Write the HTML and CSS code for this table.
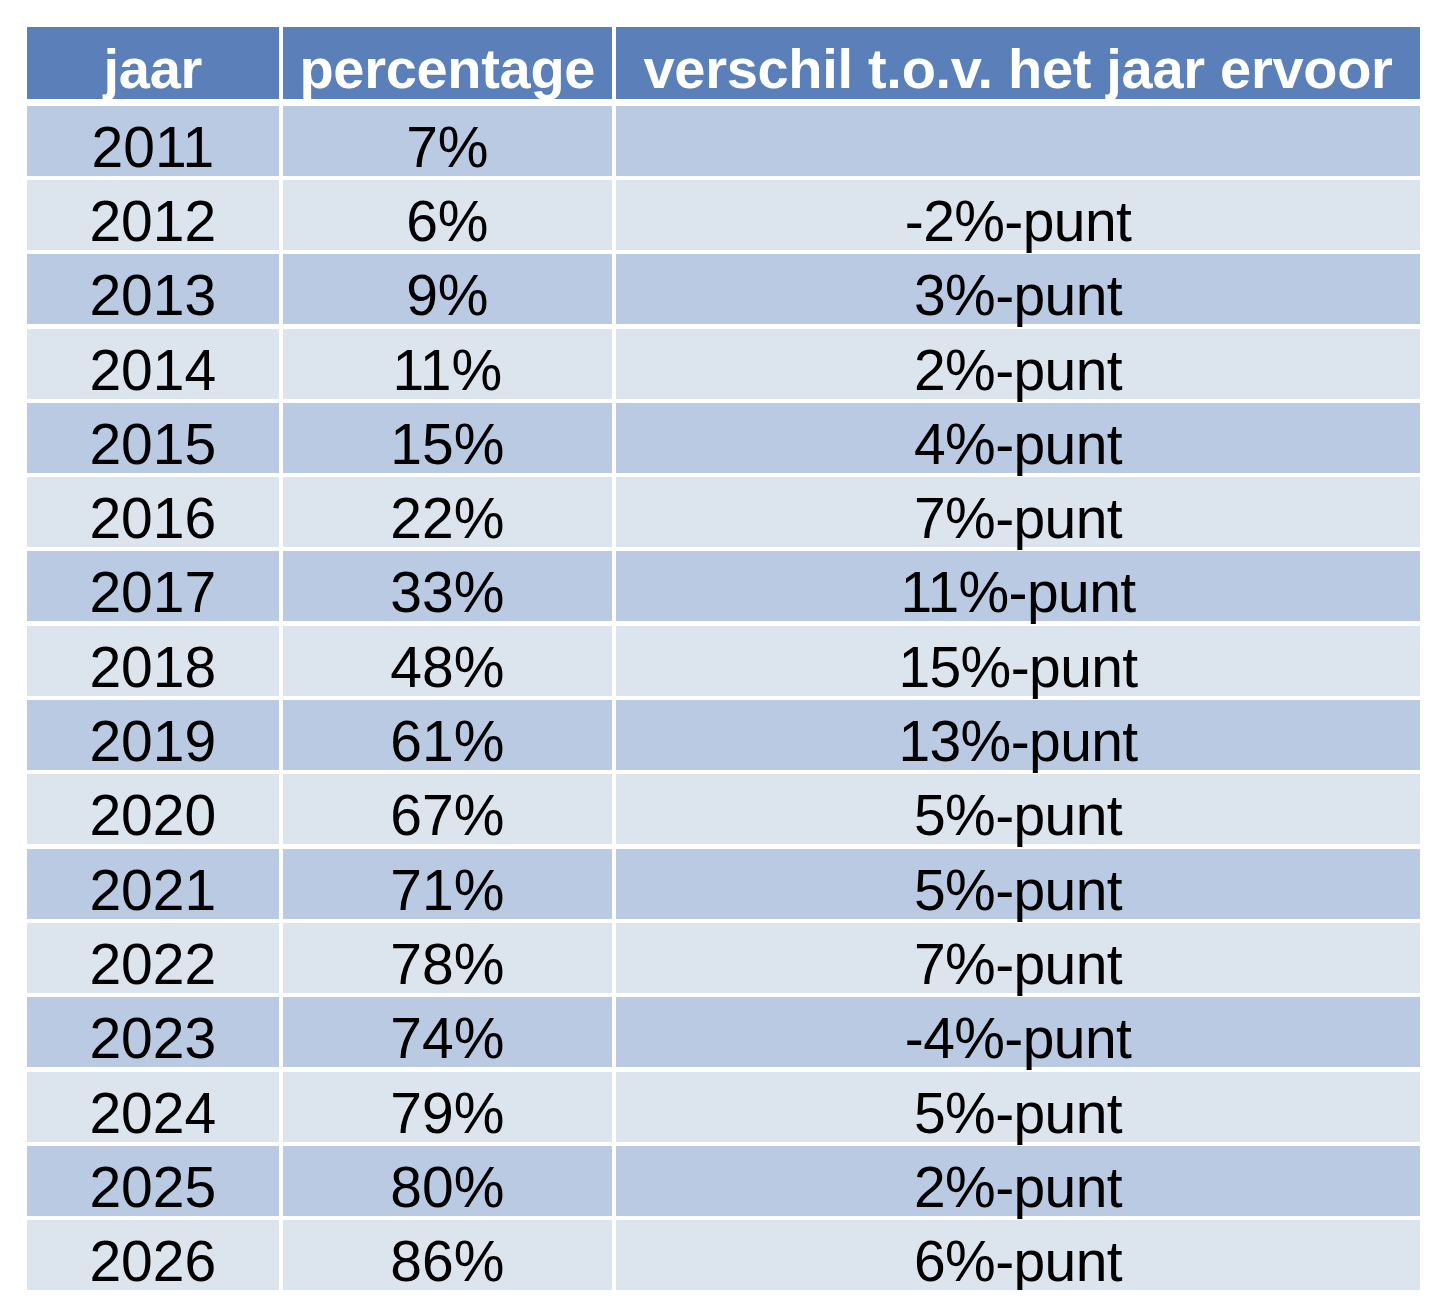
FILE: index.html
```html
<!DOCTYPE html>
<html lang="nl">
<head>
<meta charset="utf-8">
<title>Percentage per jaar</title>
<link rel="stylesheet" href="styles.css">
</head>
<body>
<div class="page">
  <div class="table">
    <div class="row head">
      <div class="cell">jaar</div>
      <div class="cell">percentage</div>
      <div class="cell">verschil t.o.v. het jaar ervoor</div>
    </div>
    <div class="row dark"><div class="cell">2011</div><div class="cell">7%</div><div class="cell diff"></div></div>
    <div class="row light"><div class="cell">2012</div><div class="cell">6%</div><div class="cell diff">-2%-punt</div></div>
    <div class="row dark"><div class="cell">2013</div><div class="cell">9%</div><div class="cell diff">3%-punt</div></div>
    <div class="row light"><div class="cell">2014</div><div class="cell">11%</div><div class="cell diff">2%-punt</div></div>
    <div class="row dark"><div class="cell">2015</div><div class="cell">15%</div><div class="cell diff">4%-punt</div></div>
    <div class="row light"><div class="cell">2016</div><div class="cell">22%</div><div class="cell diff">7%-punt</div></div>
    <div class="row dark"><div class="cell">2017</div><div class="cell">33%</div><div class="cell diff">11%-punt</div></div>
    <div class="row light"><div class="cell">2018</div><div class="cell">48%</div><div class="cell diff">15%-punt</div></div>
    <div class="row dark"><div class="cell">2019</div><div class="cell">61%</div><div class="cell diff">13%-punt</div></div>
    <div class="row light"><div class="cell">2020</div><div class="cell">67%</div><div class="cell diff">5%-punt</div></div>
    <div class="row dark"><div class="cell">2021</div><div class="cell">71%</div><div class="cell diff">5%-punt</div></div>
    <div class="row light"><div class="cell">2022</div><div class="cell">78%</div><div class="cell diff">7%-punt</div></div>
    <div class="row dark"><div class="cell">2023</div><div class="cell">74%</div><div class="cell diff">-4%-punt</div></div>
    <div class="row light"><div class="cell">2024</div><div class="cell">79%</div><div class="cell diff">5%-punt</div></div>
    <div class="row dark"><div class="cell">2025</div><div class="cell">80%</div><div class="cell diff">2%-punt</div></div>
    <div class="row light"><div class="cell">2026</div><div class="cell">86%</div><div class="cell diff">6%-punt</div></div>
  </div>
</div>
</body>
</html>
```

FILE: styles.css
```css
html, body {
  margin: 0;
  padding: 0;
  background: #ffffff;
}

.page {
  padding: 26.5px 0 0 26.7px;
  font-family: "Liberation Sans", Arial, sans-serif;
}

.table {
  display: flex;
  flex-direction: column;
  gap: 4.33px;
  width: 1393.7px;
}

.row {
  display: grid;
  grid-template-columns: 252.3px 329px 804.7px;
  column-gap: 3.85px;
  height: 70px;
}

.cell {
  box-sizing: border-box;
  height: 100%;
  text-align: center;
  white-space: nowrap;
  font-size: 57px;
  line-height: 1;
  padding-top: 13px;
  color: #000000;
}

.cell.diff {
  letter-spacing: -0.6px;
}

.row.head {
  height: 72.7px;
  margin-bottom: 2px;
}

.head .cell {
  background: #5b80b9;
  color: #ffffff;
  font-weight: 700;
  font-size: 56px;
  letter-spacing: -0.3px;
  padding-top: 14.5px;
}

.dark .cell {
  background: #bbcae3;
}

.light .cell {
  background: #dce4ee;
}
```
